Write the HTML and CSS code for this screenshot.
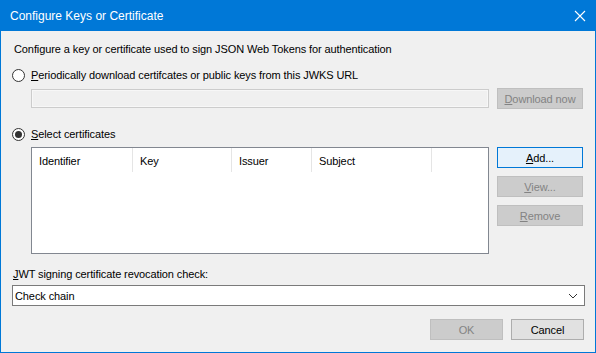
FILE: index.html
```html
<!DOCTYPE html>
<html lang="en">
<head>
  <meta charset="UTF-8">
  <title>Configure Keys or Certificate</title>
  <link rel="stylesheet" href="styles.css">
</head>
<body>

<div class="window">
  <div class="titlebar">
    <div class="title">Configure Keys or Certificate</div>
    <svg class="close" width="12" height="12" viewBox="0 0 12 12">
      <path d="M1 1 L11 11 M11 1 L1 11" stroke="#fff" stroke-width="1.1" fill="none"/>
    </svg>
  </div>

  <div class="content">
    <div class="intro">Configure a key or certificate used to sign JSON Web Tokens for authentication</div>

    <label class="radio-row first">
      <span class="radio"></span>
      <span><u>P</u>eriodically download certifcates or public keys from this JWKS URL</span>
    </label>

    <div class="url-row">
      <div class="textbox disabled"></div>
      <button class="btn disabled"><u>D</u>ownload now</button>
    </div>

    <label class="radio-row second">
      <span class="radio checked"></span>
      <span><u>S</u>elect certificates</span>
    </label>

    <div class="cert-row">
      <div class="listview">
        <div class="list-header">
          <div class="col col-id">Identifier</div>
          <div class="col col-key">Key</div>
          <div class="col col-issuer">Issuer</div>
          <div class="col col-subject">Subject</div>
        </div>
      </div>
      <div class="side-buttons">
        <button class="btn focused"><u>A</u>dd...</button>
        <button class="btn disabled"><u>V</u>iew...</button>
        <button class="btn disabled"><u>R</u>emove</button>
      </div>
    </div>

    <div class="field-label"><u>J</u>WT signing certificate revocation check:</div>
    <div class="combo">
      <span>Check chain</span>
      <svg class="chevron" width="10" height="6" viewBox="0 0 10 6">
        <path d="M1 1 L5 5 L9 1" stroke="#333" stroke-width="1" fill="none"/>
      </svg>
    </div>

    <div class="footer">
      <button class="btn disabled">OK</button>
      <button class="btn">Cancel</button>
    </div>
  </div>
</div>

</body>
</html>
```

FILE: styles.css
```css
body {
  margin: 0;
  background-color: #f0f0f0;
  font-family: "Liberation Sans", Arial, sans-serif;
  font-size: 11px;
  color: #000;
}

.window {
  width: 596px;
  height: 353px;
  box-sizing: border-box;
  border: 1px solid #0078d7;
  border-top: none;
  background-color: #f0f0f0;
}

.titlebar {
  background-color: #0078d7;
  height: 31px;
  margin: 0 -1px;
  display: flex;
  align-items: center;
  justify-content: space-between;
  padding: 0 10px;
  color: #fff;
}

.title {
  font-size: 12px;
  padding-top: 1px;
}

.content {
  padding: 0 11px;
  letter-spacing: -0.1px;
}

.intro {
  margin-top: 11px;
  height: 14px;
  line-height: 14px;
  padding-left: 2px;
}

.radio-row {
  display: flex;
  align-items: center;
  gap: 6px;
  height: 14px;
  line-height: 14px;
}

.radio-row.first {
  margin-top: 12px;
}

.radio-row.second {
  margin-top: 18px;
}

.radio {
  width: 11px;
  height: 11px;
  border: 1px solid #333;
  border-radius: 50%;
  background-color: #fff;
  display: flex;
  align-items: center;
  justify-content: center;
}

.radio.checked::after {
  content: "";
  width: 7px;
  height: 7px;
  border-radius: 50%;
  background-color: #333;
}

.url-row {
  display: flex;
  align-items: center;
  margin-top: 6px;
  padding-left: 19px;
}

.textbox {
  width: 456px;
  height: 17px;
  border: 1px solid #ccc;
  box-shadow: inset 0 0 0 1px #f7f7f7;
  background-color: #f0f0f0;
}

.url-row .btn {
  margin-left: 8px;
}

.btn {
  width: 86px;
  height: 21px;
  box-sizing: border-box;
  border: 1px solid #adadad;
  background-color: #e1e1e1;
  font-family: inherit;
  font-size: 11px;
  letter-spacing: inherit;
  color: #000;
  padding: 0;
}

.btn.disabled {
  background-color: #cccccc;
  border-color: #bfbfbf;
  color: #838383;
}

.btn.focused {
  background-color: #e5f1fb;
  border-color: #0078d7;
}

.cert-row {
  display: flex;
  margin-top: 6px;
  padding-left: 19px;
}

.listview {
  width: 456px;
  height: 105px;
  border: 1px solid #828790;
  background-color: #fff;
}

.list-header {
  display: flex;
  height: 24px;
}

.col {
  border-right: 1px solid #e5e5e5;
  padding-left: 7px;
  line-height: 26px;
  box-sizing: border-box;
}

.col-id { width: 101px; }
.col-key { width: 99px; }
.col-issuer { width: 80px; }
.col-subject { width: 120px; }

.side-buttons {
  display: flex;
  flex-direction: column;
  gap: 8px;
  margin-left: 8px;
}

.field-label {
  margin-top: 13px;
  height: 14px;
  line-height: 14px;
  padding-left: 1px;
}

.combo {
  margin-top: 4px;
  height: 19px;
  width: 563px;
  border: 1px solid #7a7a7a;
  background-color: #fff;
  display: flex;
  align-items: center;
  justify-content: space-between;
  padding: 0 6px 0 2px;
}

.footer {
  display: flex;
  justify-content: flex-end;
  gap: 8px;
  margin-top: 13px;
}

.footer .btn {
  width: 73px;
}
```
